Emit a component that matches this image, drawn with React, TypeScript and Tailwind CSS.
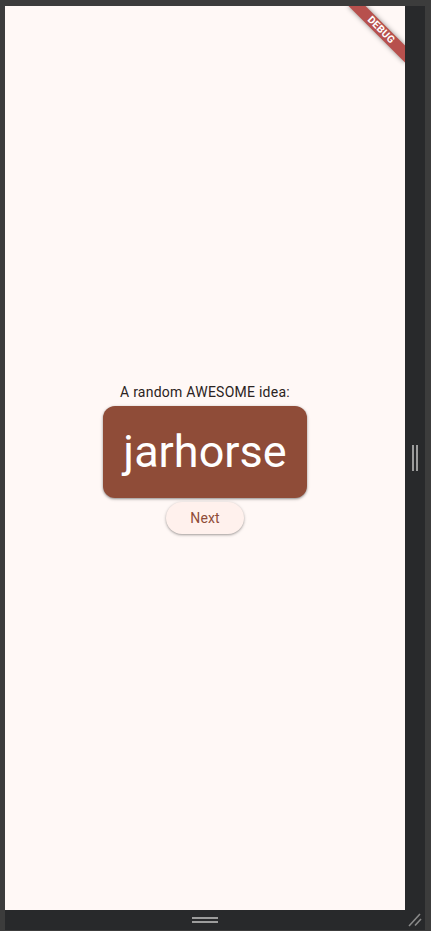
import React from 'react';

const DebugBanner: React.FC = () => (
    <div className="absolute left-[336px] top-[18px] w-[80px] h-[12px] rotate-45 bg-[#b7504d] shadow-[0_0_5px_rgba(0,0,0,0.45)] flex items-center justify-center">
        <span className="text-white font-bold text-[10.2px] leading-none tracking-[0.2px] font-['Roboto',sans-serif]">DEBUG</span>
    </div>
);

const App: React.FC = () => {
    return (
        <div className="w-[431px] h-[931px] bg-[#3c3c3c] pt-[6px] pl-[5px] overflow-hidden">
            <div className="w-[420px] h-[924px] bg-[#28292b] flex flex-col">
                <div className="flex h-[904px]">
                    {/* app surface */}
                    <div className="relative overflow-hidden w-[400px] h-[904px] bg-[#fff8f6] flex flex-col items-center justify-center font-['Roboto',sans-serif]">
                        <p className="text-[14px] leading-[20px] tracking-[0.25px] text-[#2b2322]">A random AWESOME idea:</p>
                        <div className="m-[4px] rounded-[12px] bg-[#8f4c38] p-[20px] shadow-[0_1px_2px_rgba(0,0,0,0.3),0_1px_3px_1px_rgba(0,0,0,0.12)]">
                            <span className="block text-[45px] leading-[52px] text-white">jarhorse</span>
                        </div>
                        <button className="h-[32px] px-[24px] rounded-full bg-[#fff1ed] text-[#8f4c38] text-[14px] font-normal tracking-[0.1px] shadow-[0_1px_2px_rgba(0,0,0,0.25),0_1px_3px_1px_rgba(0,0,0,0.1)]">
                            Next
                        </button>
                        <DebugBanner />
                    </div>
                    {/* right resize handle */}
                    <div className="w-[20px] flex items-center justify-center gap-[2px]">
                        <div className="w-[2px] h-[26px] bg-[#9c9c9c]" />
                        <div className="w-[2px] h-[26px] bg-[#9c9c9c]" />
                    </div>
                </div>
                {/* bottom handle row */}
                <div className="flex h-[20px]">
                    <div className="w-[400px] flex flex-col items-center justify-center gap-[2px]">
                        <div className="w-[26px] h-[2px] bg-[#9c9c9c]" />
                        <div className="w-[26px] h-[2px] bg-[#9c9c9c]" />
                    </div>
                    <div className="w-[20px] h-[20px]">
                        <svg width="20" height="20" viewBox="0 0 20 20">
                            <line x1="15" y1="4" x2="4" y2="16" stroke="#8a8a8a" strokeWidth="1.6" />
                            <line x1="16" y1="9" x2="10" y2="15.5" stroke="#8a8a8a" strokeWidth="1.6" />
                        </svg>
                    </div>
                </div>
            </div>
        </div>
    );
};

export default App;
